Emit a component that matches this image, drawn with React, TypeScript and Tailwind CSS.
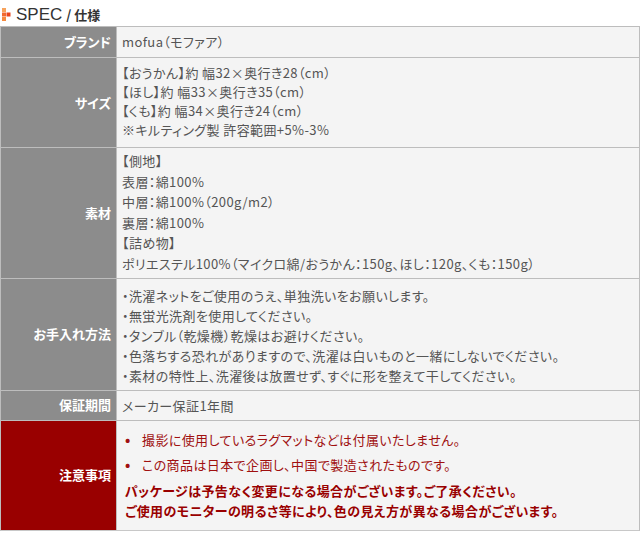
import React from 'react';

const font = { fontFamily: '"Noto Sans CJK JP", "Noto Sans", sans-serif' };

type Row = {
  label: string;
  lines: string[];
  pad: string;
  leading: string;
};

const rows: Row[] = [
  { label: 'ブランド', lines: ['mofua（モファア）'], pad: 'pt-[5px] pb-[5px]', leading: 'leading-[20px]' },
  {
    label: 'サイズ',
    lines: [
      '【おうかん】約 幅32×奥行き28（cm）',
      '【ほし】約 幅33×奥行き35（cm）',
      '【くも】約 幅34×奥行き24（cm）',
      '※キルティング製 許容範囲+5%-3%',
    ],
    pad: 'pt-[5px] pb-[8px]',
    leading: 'leading-[19px]',
  },
  {
    label: '素材',
    lines: [
      '【側地】',
      '表層：綿100%',
      '中層：綿100%（200g/m2）',
      '裏層：綿100%',
      '【詰め物】',
      'ポリエステル100%（マイクロ綿/おうかん：150g、ほし：120g、くも：150g）',
    ],
    pad: 'pt-[3px] pb-[3px]',
    leading: 'leading-[20.6px]',
  },
  {
    label: 'お手入れ方法',
    lines: [
      '・洗濯ネットをご使用のうえ、単独洗いをお願いします。',
      '・無蛍光洗剤を使用してください。',
      '・タンブル（乾燥機）乾燥はお避けください。',
      '・色落ちする恐れがありますので、洗濯は白いものと一緒にしないでください。',
      '・素材の特性上、洗濯後は放置せず、すぐに形を整えて干してください。',
    ],
    pad: 'pt-[7px] pb-[4px]',
    leading: 'leading-[20px]',
  },
  { label: '保証期間', lines: ['メーカー保証1年間'], pad: 'pt-[5px] pb-[4px]', leading: 'leading-[20px]' },
];

export default function App() {
  return (
    <div className="w-[640px] h-[544px] bg-white text-[#555] [font-feature-settings:'palt']" style={font}>
      {/* header */}
      <div className="flex items-center h-[26px] pl-[2px] pt-[3px]">
        <svg width="11" height="13" viewBox="0 0 11 13" className="mr-[3px]">
          <rect x="0" y="0" width="4" height="4" fill="#f7a35c" />
          <rect x="0" y="4.5" width="4" height="4" fill="#f26a2e" />
          <rect x="4.5" y="4.5" width="4" height="4" fill="#e8451c" />
          <rect x="0" y="9" width="4" height="4" fill="#f58a3f" />
        </svg>
        <span className="text-[17px] leading-none text-[#333]" style={{ fontFamily: '"Liberation Sans", Arial, sans-serif' }}>
          SPEC
        </span>
        <span className="text-[13px] font-bold text-[#333] ml-[4px]">/ 仕様</span>
      </div>

      {/* table */}
      <div className="border border-[#bdbdbd] border-b-[#c8c8c8]">
        {rows.map((r, i) => (
          <div key={i} className="flex border-b border-[#bdbdbd]">
            <div className="w-[116px] shrink-0 bg-[#8c8c8c] border-r border-[#bdbdbd] flex items-center justify-end pr-[5px] text-white font-bold text-[13px]">
              {r.label}
            </div>
            <div className={`flex-1 bg-[#f4f4f4] pl-[5px] text-[13px] tracking-[0.4px] ${r.pad} ${r.leading}`}>
              {r.lines.map((l, j) => (
                <div key={j}>{l}</div>
              ))}
            </div>
          </div>
        ))}
        <div className="flex">
          <div className="w-[116px] shrink-0 bg-[#990000] border-r border-[#bdbdbd] flex items-center justify-end pr-[5px] text-white font-bold text-[13px]">
            注意事項
          </div>
          <div className="flex-1 bg-[#f4f4f4] pl-[8px] pt-[6px] pb-[9px] text-[13px] tracking-[0.4px] text-[#990000] font-bold">
            <ul className="leading-[25px] font-normal text-[#a01010]">
              <li className="flex">
                <span className="w-[17px] text-[14px] font-bold">•</span>
                <span>撮影に使用しているラグマットなどは付属いたしません。</span>
              </li>
              <li className="flex">
                <span className="w-[17px] text-[14px] font-bold">•</span>
                <span>この商品は日本で企画し、中国で製造されたものです。</span>
              </li>
            </ul>
            <div className="leading-[20px] mt-[4px]">
              <div>パッケージは予告なく変更になる場合がございます。ご了承ください。</div>
              <div>ご使用のモニターの明るさ等により、色の見え方が異なる場合がございます。</div>
            </div>
          </div>
        </div>
      </div>
    </div>
  );
}
